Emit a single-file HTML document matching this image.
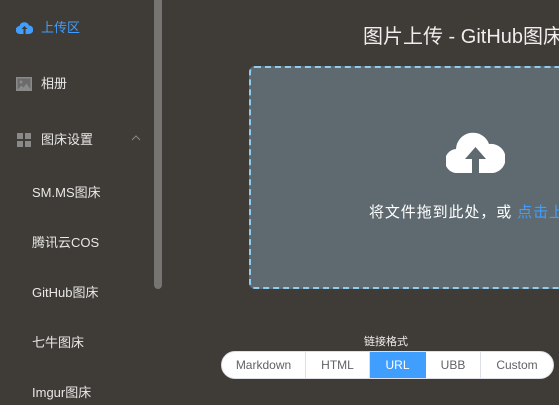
<!DOCTYPE html>
<html><head><meta charset="utf-8"><style>
*{margin:0;padding:0;box-sizing:border-box}
body{width:559px;height:405px;overflow:hidden;background:#3f3b36;font-family:"Liberation Sans","Noto Sans CJK SC",sans-serif;position:relative;color:#e8e8e8}
.t{position:absolute;font-size:13px;white-space:nowrap;line-height:16px}
.sb{position:absolute;left:154px;top:0;width:8px;height:289px;background:#767574;border-radius:0 0 4px 4px}
.box{position:absolute;left:249px;top:66px;width:330px;height:223px;background:#5e6a70;border:2px dashed #8fcdf0;border-radius:6px}
.seg{position:absolute;top:351px;left:221px;height:28px;display:flex;background:#fff;border-radius:14px;overflow:hidden;border:1px solid #dcdfe6}
.seg div{font-size:12px;color:#606266;line-height:26px;text-align:center;border-right:1px solid #dcdfe6}
</style></head><body>
<svg style="position:absolute;left:16px;top:20px" width="17" height="15" viewBox="0 0 17 15"><path d="M4 14a4 4 0 0 1-.5-8A5 5 0 0 1 13 5.5a4 4 0 0 1 0 8.5z" fill="#409eff"/><path d="M8.5 6l-3 3h2v5h2V9h2z" fill="#3f3b36"/></svg>
<div class="t" style="left:41px;top:20px;color:#409eff">上传区</div>
<svg style="position:absolute;left:16px;top:77px" width="16" height="14" viewBox="0 0 16 14"><rect width="16" height="14" fill="#8a8a8a"/><rect x="1.5" y="1.5" width="13" height="11" fill="#6b6b6b"/><circle cx="5" cy="5" r="1.5" fill="#8a8a8a"/><path d="M1.5 12.5l4-4 2 2 3-4 4 6z" fill="#8a8a8a"/></svg>
<div class="t" style="left:41px;top:76px">相册</div>
<svg style="position:absolute;left:17px;top:133px" width="14" height="14"><rect width="6" height="6" fill="#8a8a8a"/><rect x="8" width="6" height="6" fill="#8a8a8a"/><rect y="8" width="6" height="6" fill="#8a8a8a"/><rect x="8" y="8" width="6" height="6" fill="#8a8a8a"/></svg>
<div class="t" style="left:41px;top:132px">图床设置</div>
<svg style="position:absolute;left:131px;top:135px" width="10" height="6"><path d="M1 5l4-4 4 4" stroke="#888" fill="none"/></svg>
<div class="t" style="left:32px;top:185px">SM.MS图床</div>
<div class="t" style="left:32px;top:235px">腾讯云COS</div>
<div class="t" style="left:32px;top:285px">GitHub图床</div>
<div class="t" style="left:32px;top:335px">七牛图床</div>
<div class="t" style="left:32px;top:385px">Imgur图床</div>
<div class="sb"></div>
<div style="position:absolute;left:363px;top:20px;font-size:20px;white-space:nowrap;color:#eee">图片上传 - GitHub图床</div>
<div class="box"></div>
<svg style="position:absolute;left:446px;top:128px" width="59" height="45" viewBox="0 0 59 45"><path d="M12 45A12 12 0 0 1 10 21 17 17 0 0 1 43 16 14.5 14.5 0 0 1 47 45z" fill="#fff"/><path d="M29.5 19L19 31h7v14h7V31h7z" fill="#5e6a70"/></svg>
<div style="position:absolute;left:369px;top:201px;font-size:15px;letter-spacing:0.9px;white-space:nowrap;color:#fff">将文件拖到此处，或 <span style="color:#409eff">点击上传</span></div>
<div style="position:absolute;left:364px;top:333px;font-size:11px;color:#eee">链接格式</div>
<div class="seg">
<div style="width:84px">Markdown</div>
<div style="width:64px">HTML</div>
<div style="width:56px;background:#409eff;color:#fff;border-color:#409eff">URL</div>
<div style="width:55px">UBB</div>
<div style="width:72px;border:none">Custom</div>
</div>
</body></html>
